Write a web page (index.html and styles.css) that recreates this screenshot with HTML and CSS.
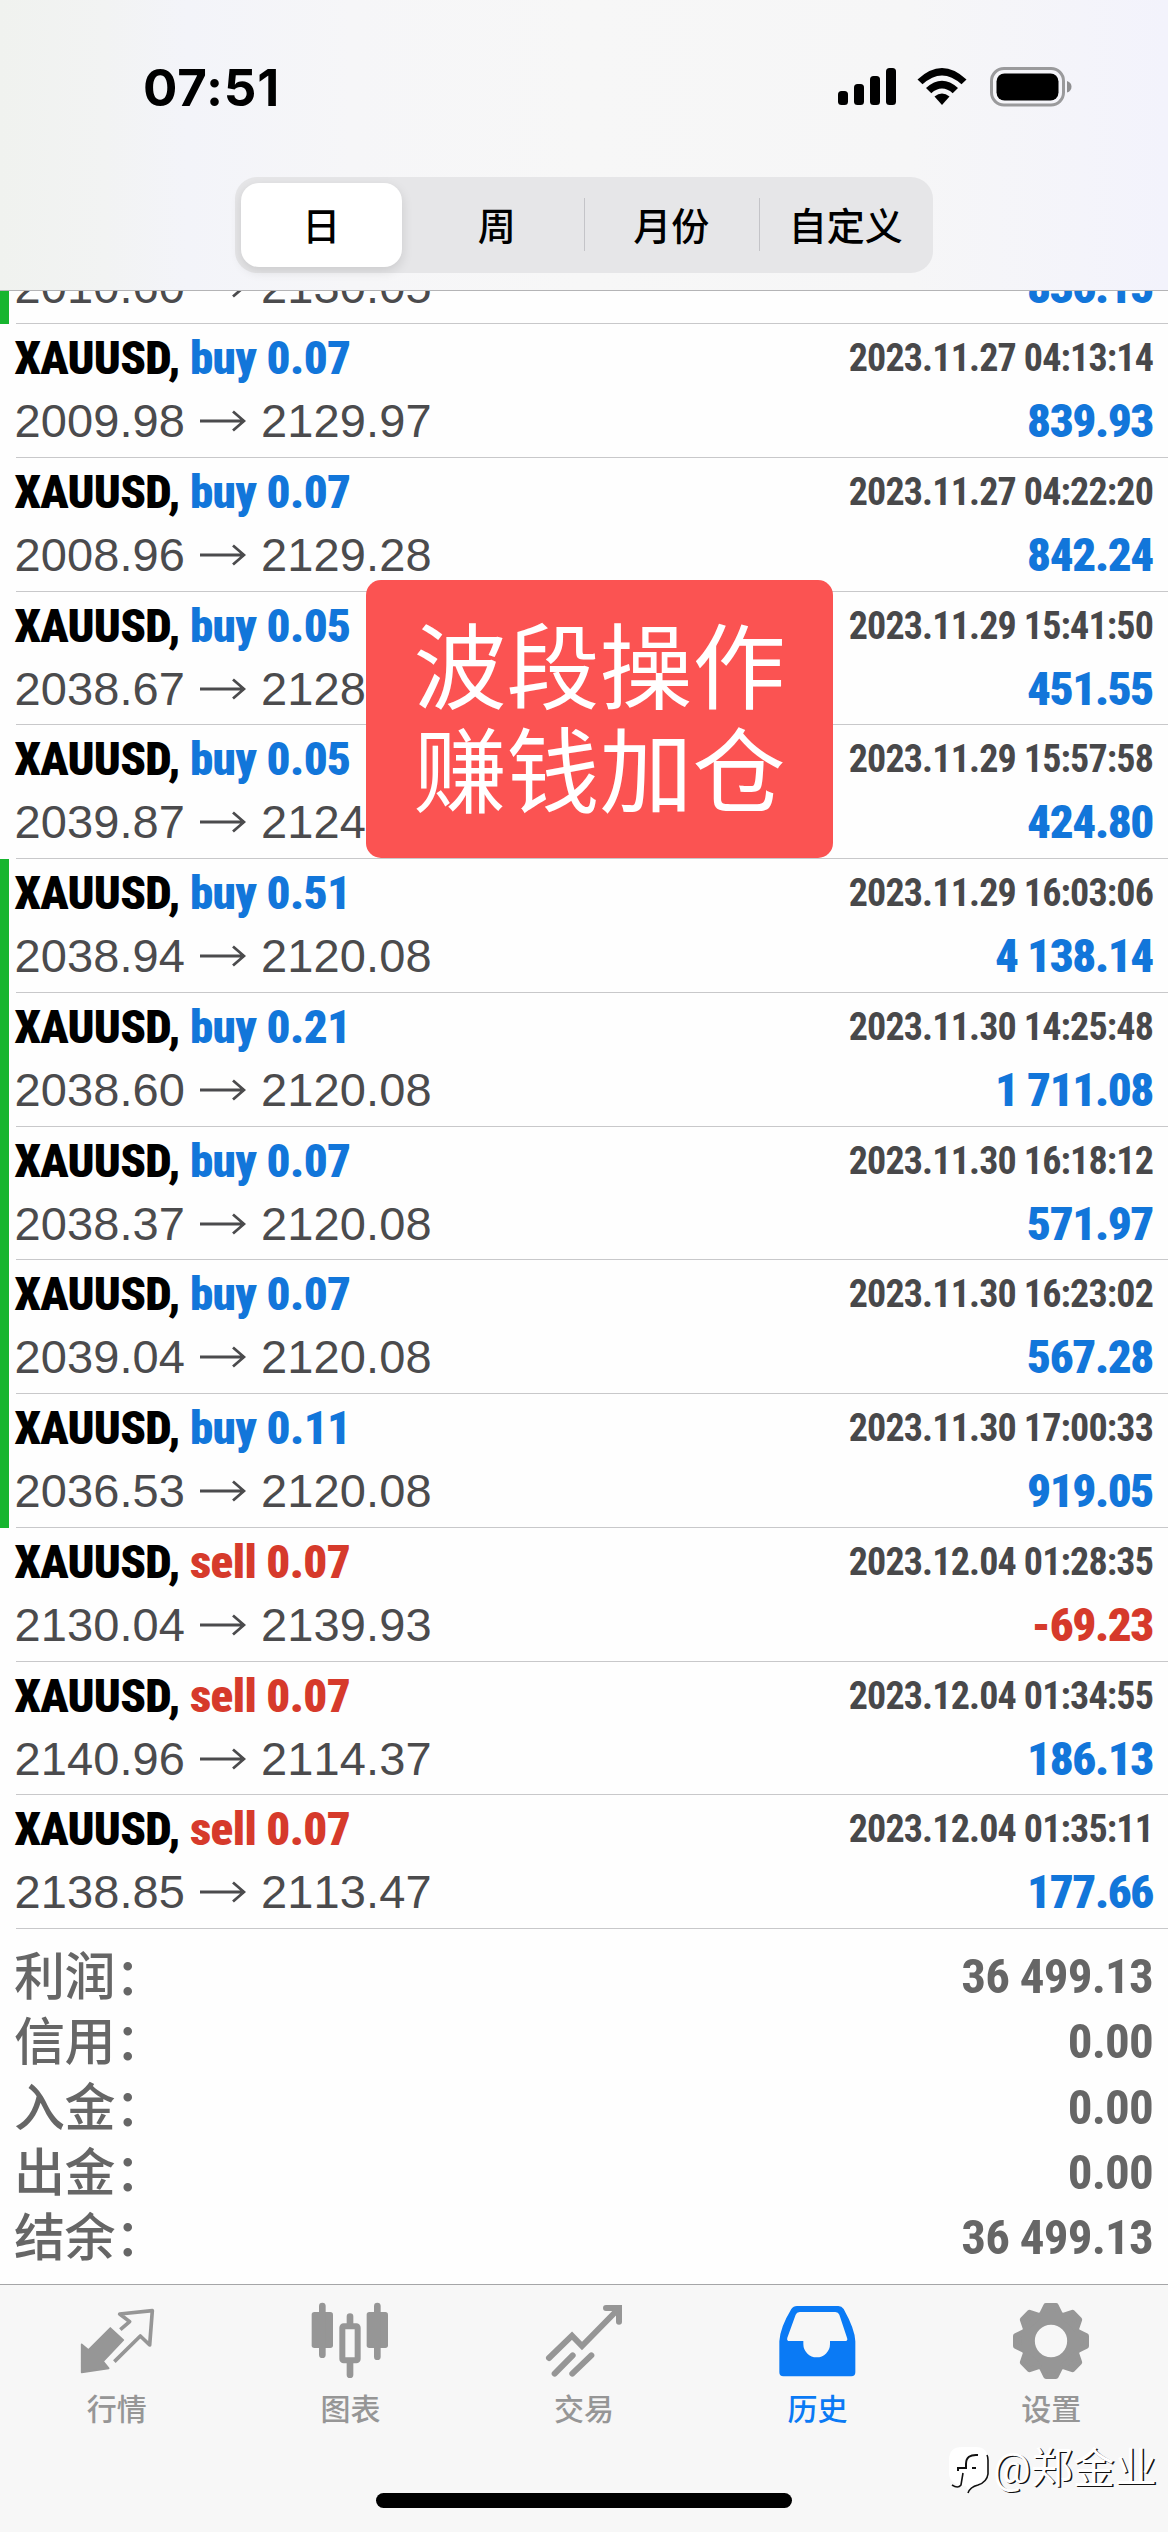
FILE: index.html
```html
<!DOCTYPE html>
<html lang="zh-CN">
<head>
<meta charset="utf-8">
<title>历史</title>
<link rel="stylesheet" href="styles.css">
</head>
<body>
<svg class="defs" width="0" height="0">
  <symbol id="arrow" viewBox="0 0 46 24"><path d="M0 12H43M33 2.5L44 12L33 21.5" fill="none" stroke="currentColor" stroke-width="2.8"/></symbol>
</svg>
<div class="screen">
  <header class="header">
    <div class="status">
      <span class="time">07:51</span>
      <div class="status-icons">
        <svg width="60" height="40" viewBox="0 0 60 40"><rect x="1" y="24" width="10" height="14" rx="3.5"/><rect x="17" y="17" width="10" height="21" rx="3.5"/><rect x="33" y="9" width="10" height="29" rx="3.5"/><rect x="49" y="1" width="10" height="37" rx="3.5"/></svg>
        <svg class="wifi" width="50" height="40" viewBox="0 0 50 40"><path d="M0.500 12.500Q25 -10.500 49.500 12.500L44.500 17.300Q25 -.5 5.500 17.300Z"/><path d="M9 21Q25 6.500 41 21L35.700 26.200Q25 17 14.300 26.200Z"/><path d="M17.500 29.500Q25 23.500 32.500 29.500L25 38Z"/></svg>
        <svg class="battery" width="82" height="40" viewBox="0 0 82 40"><rect x="1.500" y="1.500" width="72" height="36.500" rx="12.500" fill="none" stroke="#9a9a9c" stroke-width="3"/><rect x="6.500" y="6.500" width="62" height="27" rx="8"/><path d="M77 14Q81.500 15.500 81.500 19.700Q81.500 24 77 25.500Z" fill="#8e8e90"/></svg>
      </div>
    </div>
    <nav class="segments">
      <span class="segment selected">日</span>
      <span class="segment">周</span>
      <span class="segment divided">月份</span>
      <span class="segment divided">自定义</span>
    </nav>
  </header>

  <main class="content">
    <section class="deals">
      <div class="clipped">
        <article class="deal marked"><div class="body">
          <div class="line prices"><span>2010.60<svg><use href="#arrow"/></svg>2130.05</span><strong>836.15</strong></div>
        </div></article>
      </div>
      <article class="deal"><div class="body">
        <div class="line"><b>XAUUSD, <span class="buy">buy 0.07</span></b><time>2023.11.27 04:13:14</time></div>
        <div class="line prices"><span>2009.98<svg><use href="#arrow"/></svg>2129.97</span><strong>839.93</strong></div>
      </div></article>
      <article class="deal"><div class="body">
        <div class="line"><b>XAUUSD, <span class="buy">buy 0.07</span></b><time>2023.11.27 04:22:20</time></div>
        <div class="line prices"><span>2008.96<svg><use href="#arrow"/></svg>2129.28</span><strong>842.24</strong></div>
      </div></article>
      <article class="deal"><div class="body">
        <div class="line"><b>XAUUSD, <span class="buy">buy 0.05</span></b><time>2023.11.29 15:41:50</time></div>
        <div class="line prices"><span>2038.67<svg><use href="#arrow"/></svg>2128</span><strong>451.55</strong></div>
      </div></article>
      <article class="deal"><div class="body">
        <div class="line"><b>XAUUSD, <span class="buy">buy 0.05</span></b><time>2023.11.29 15:57:58</time></div>
        <div class="line prices"><span>2039.87<svg><use href="#arrow"/></svg>2124</span><strong>424.80</strong></div>
      </div></article>
      <article class="deal marked"><div class="body">
        <div class="line"><b>XAUUSD, <span class="buy">buy 0.51</span></b><time>2023.11.29 16:03:06</time></div>
        <div class="line prices"><span>2038.94<svg><use href="#arrow"/></svg>2120.08</span><strong>4 138.14</strong></div>
      </div></article>
      <article class="deal marked"><div class="body">
        <div class="line"><b>XAUUSD, <span class="buy">buy 0.21</span></b><time>2023.11.30 14:25:48</time></div>
        <div class="line prices"><span>2038.60<svg><use href="#arrow"/></svg>2120.08</span><strong>1 711.08</strong></div>
      </div></article>
      <article class="deal marked"><div class="body">
        <div class="line"><b>XAUUSD, <span class="buy">buy 0.07</span></b><time>2023.11.30 16:18:12</time></div>
        <div class="line prices"><span>2038.37<svg><use href="#arrow"/></svg>2120.08</span><strong>571.97</strong></div>
      </div></article>
      <article class="deal marked"><div class="body">
        <div class="line"><b>XAUUSD, <span class="buy">buy 0.07</span></b><time>2023.11.30 16:23:02</time></div>
        <div class="line prices"><span>2039.04<svg><use href="#arrow"/></svg>2120.08</span><strong>567.28</strong></div>
      </div></article>
      <article class="deal marked"><div class="body">
        <div class="line"><b>XAUUSD, <span class="buy">buy 0.11</span></b><time>2023.11.30 17:00:33</time></div>
        <div class="line prices"><span>2036.53<svg><use href="#arrow"/></svg>2120.08</span><strong>919.05</strong></div>
      </div></article>
      <article class="deal"><div class="body">
        <div class="line"><b>XAUUSD, <span class="sell">sell 0.07</span></b><time>2023.12.04 01:28:35</time></div>
        <div class="line prices"><span>2130.04<svg><use href="#arrow"/></svg>2139.93</span><strong class="sell">-69.23</strong></div>
      </div></article>
      <article class="deal"><div class="body">
        <div class="line"><b>XAUUSD, <span class="sell">sell 0.07</span></b><time>2023.12.04 01:34:55</time></div>
        <div class="line prices"><span>2140.96<svg><use href="#arrow"/></svg>2114.37</span><strong>186.13</strong></div>
      </div></article>
      <article class="deal"><div class="body">
        <div class="line"><b>XAUUSD, <span class="sell">sell 0.07</span></b><time>2023.12.04 01:35:11</time></div>
        <div class="line prices"><span>2138.85<svg><use href="#arrow"/></svg>2113.47</span><strong>177.66</strong></div>
      </div></article>
    </section>
    <dl class="summary">
      <div><dt>利润：</dt><dd>36 499.13</dd></div>
      <div><dt>信用：</dt><dd>0.00</dd></div>
      <div><dt>入金：</dt><dd>0.00</dd></div>
      <div><dt>出金：</dt><dd>0.00</dd></div>
      <div><dt>结余：</dt><dd>36 499.13</dd></div>
    </dl>
    <div class="note">波段操作<br>赚钱加仓</div>
  </main>

  <footer class="footer">
    <nav class="tabs">
      <a class="tab"><svg viewBox="5 0 270 270"><path d="M34 145L54 162L120 96L159 132L98 196L115 217L34 229Z" fill="currentColor" stroke="currentColor" stroke-width="5" stroke-linejoin="round"/><path d="M150 101L178 77L148 54L246 44L238 147L210 120L132 197" fill="none" stroke="currentColor" stroke-width="11" stroke-linejoin="round"/></svg>行情</a>
      <a class="tab"><svg viewBox="706 0 270 270" fill="currentColor"><rect x="726" y="48" width="64" height="108" rx="8"/><rect x="748" y="20" width="20" height="166" rx="10"/><rect x="891" y="48" width="64" height="108" rx="8"/><rect x="913" y="20" width="20" height="172" rx="10"/><rect x="831" y="52" width="20" height="44" rx="10"/><rect x="831" y="190" width="20" height="56" rx="10"/><rect x="818" y="91" width="46" height="102" rx="4" fill="none" stroke="currentColor" stroke-width="18"/></svg>图表</a>
      <a class="tab"><svg viewBox="27 0 270 270"><path d="M57 186L126 119L156 150L262 42M228 36H267V77M74 233L128 178M127 233L184 178" fill="none" stroke="currentColor" stroke-width="18" stroke-linecap="round"/></svg>交易</a>
      <a class="tab active"><svg viewBox="728 0 270 270"><path fill="currentColor" fill-rule="evenodd" d="M800 30H924Q934 30 940 39Q974 100 975 136V229Q975 241 963 241H759Q747 241 747 229V136Q749 95 783 39Q789 30 800 30ZM808 48Q799 48 796 56L771 125Q768 135 778 135H819V144A40 40 0 0 0 899 144V135H943Q954 135 950 125L927 56Q924 48 915 48Z"/></svg>历史</a>
      <a class="tab"><svg viewBox="-135 -135 270 270"><circle r="70" fill="none" stroke="currentColor" stroke-width="43"/><g fill="currentColor" stroke="currentColor" stroke-width="16" stroke-linejoin="round"><path id="tooth" d="M-28 -80L-15 -106H15L28 -80Z"/><use href="#tooth" transform="rotate(45)"/><use href="#tooth" transform="rotate(90)"/><use href="#tooth" transform="rotate(135)"/><use href="#tooth" transform="rotate(180)"/><use href="#tooth" transform="rotate(225)"/><use href="#tooth" transform="rotate(270)"/><use href="#tooth" transform="rotate(315)"/></g></svg>设置</a>
    </nav>
    <div class="home"></div>
    <div class="watermark"><svg width="42" height="50" viewBox="0 0 42 50"><path d="M13 0H27Q39 0 39 13V27Q39 36 29 38Q23 40 20 45L17 39Q0 38 0 26V13Q0 0 13 0Z" fill="#fff"/><path d="M38 8Q39 10 39 13V27Q38 35 29 38Q21 40 19 46M3 38Q9 42 12 38L14 26" fill="none" stroke="#111" stroke-width="1.600"/><path d="M29 8Q17 7 17 17V21H9V24M23 21H27" fill="none" stroke="#111" stroke-width="2"/></svg><span>@郑金业</span></div>
  </footer>
</div>
</body>
</html>
```
FILE: styles.css
```css
* { box-sizing: border-box; }
body { margin: 0; background: #fefefe; font-family: "Liberation Sans", "Noto Sans CJK SC", sans-serif; }
.defs { display: block; }
.screen { width: 1168px; height: 2532px; display: flex; flex-direction: column; overflow: hidden; }

.header {
  height: 291px; flex: none; border-bottom: 1px solid #b4b4b6;
  background: linear-gradient(90deg, #f0f2ef 0%, #f2f3f3 9%, #f3f4f9 16%, #f6f6f8 30%, #f7f7f7 50%, #f6f6f7 78%, #f3f3fc 100%);
  display: flex; flex-direction: column; align-items: center;
}
.status { width: 100%; height: 177px; padding: 67px 96px 0 143px; display: flex; justify-content: space-between; align-items: flex-start; }
.time { font: 700 51px/41px "Inter", sans-serif; letter-spacing: 0.8px; }
.status-icons { display: flex; }
.wifi { margin-left: 20px; }
.battery { margin-left: 23px; }

.segments { width: 698px; height: 96px; border-radius: 22px; background: #e6e6e8; padding: 6px 0; display: grid; grid-template-columns: repeat(4, 1fr); }
.segment { font: 500 38px/81px "Noto Sans CJK SC", sans-serif; height: 84px; text-align: center; position: relative; color: #000; }
.selected { background: #fff; border-radius: 18px; margin: 0 8px 0 6px; box-shadow: 0 4px 12px rgba(0,0,0,.12); }
.divided::before { content: ""; position: absolute; left: 0; top: 15px; width: 1px; height: 53px; background: #c4c4c8; }

.content { height: 1993px; flex: none; position: relative; }
.clipped { height: 33px; display: flex; flex-direction: column; justify-content: flex-end; overflow: hidden; }
.clipped .body { padding-top: 67px; }
.deal { height: 133.75px; flex: none; padding-left: 16px; }
.marked { background: linear-gradient(90deg, #17b52f 9px, transparent 9px); }
.body { height: 100%; padding: 1px 15px 0 0; border-bottom: 1px solid #c8c8ca; }
.line { height: 66px; margin-left: -1.5px; display: flex; justify-content: space-between; white-space: pre; font: 700 47px/66px "Roboto Condensed", sans-serif; }
.line b { letter-spacing: -0.8px; color: #000; }
.line b span { letter-spacing: -0.6px; }
.line time { font-size: 38px; letter-spacing: -0.85px; color: #48484a; }
.prices { height: 60px; line-height: 60px; }
.prices span { font: 400 47px/60px "Liberation Sans", sans-serif; font-kerning: none; letter-spacing: 0.1px; color: #4b4b4d; display: flex; align-items: center; }
.prices svg { width: 46px; height: 24px; margin: 0 15px; }
.prices strong { color: #1276da; letter-spacing: -1.4px; }
.buy { color: #1276da; }
.sell, .prices .sell { color: #d63a2b; }

.summary { margin: 0; padding: 15px 15px 0 14px; color: #666; }
.summary div { height: 65.3px; display: flex; justify-content: space-between; }
.summary dt { font: 500 51px/59px "Noto Sans CJK SC", sans-serif; letter-spacing: -0.5px; }
.summary dd { margin: 0; font: 700 49px/66px "Roboto Condensed", sans-serif; letter-spacing: -0.8px; }

.note {
  position: absolute; left: 366px; top: 289px; width: 467px; height: 278px; padding: 30px 0 0;
  border-radius: 15px; background: #fb5352; color: #fff; text-align: center;
  font: 400 93px/104px "Noto Sans CJK SC", sans-serif;
}

.footer { flex: 1; border-top: 1px solid #a5a5a7; background: #f7f7f7; position: relative; display: flex; flex-direction: column; align-items: center; }
.tabs { width: 100%; padding-top: 11px; display: grid; grid-template-columns: repeat(5, 1fr); }
.tab { display: flex; flex-direction: column; align-items: center; color: #969696; font: 500 30px/36px "Noto Sans CJK SC", sans-serif; }
.tab svg { width: 90px; height: 90px; margin-bottom: 3px; }
.active { color: #0a7af5; }
.home { width: 416px; height: 15px; border-radius: 8px; background: #000; margin-top: 68px; }
.watermark { position: absolute; left: 949px; top: 162px; display: flex; }
.watermark span { font: 400 42px/44px "Roboto", "Noto Sans CJK SC", sans-serif; color: #fff; text-shadow: 1.5px 1px 0 #111; margin-left: 2px; }
```
